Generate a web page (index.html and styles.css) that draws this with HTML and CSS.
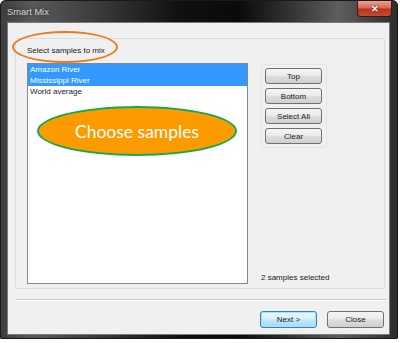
FILE: index.html
```html
<!DOCTYPE html>
<html lang="en">
<head>
    <meta charset="UTF-8">
    <meta name="viewport" content="width=device-width, initial-scale=1.0">
    <title>Smart Mix</title>
    <link rel="stylesheet" href="styles.css">
</head>
<body>
    <!-- Dialog window -->
    <div class="window">
        <div class="titlebar">
            <span class="title">Smart Mix</span>
            <button class="close-btn">&#x2715;</button>
        </div>

        <div class="client">
            <div class="group">
                <p class="label">Select samples to mix</p>
                <div class="group-body">
                    <ul class="listbox">
                        <li class="selected">Amazon River</li>
                        <li class="selected">Mississippi River</li>
                        <li>World average</li>
                    </ul>
                    <div class="side">
                        <div class="side-buttons">
                            <button class="btn">Top</button>
                            <button class="btn">Bottom</button>
                            <button class="btn">Select All</button>
                            <button class="btn">Clear</button>
                        </div>
                        <p class="status">2 samples selected</p>
                    </div>
                </div>
            </div>

            <div class="separator"></div>

            <div class="footer">
                <button class="btn btn-default">Next &gt;</button>
                <button class="btn">Close</button>
            </div>
        </div>
    </div>

    <!-- Callout annotations -->
    <div class="callout-ring"></div>
    <div class="callout-bubble">Choose samples</div>
</body>
</html>
```

FILE: styles.css
```css
body {
    margin: 0;
    width: 400px;
    height: 343px;
    background: #fff;
    font-family: "Liberation Sans", Arial, sans-serif;
    font-size: 8px;
    color: #1a1a1a;
    position: relative;
    overflow: hidden;
}

/* Window frame */
.window {
    width: 398px;
    height: 339px;
    box-sizing: border-box;
    padding: 0 8px 4px 7px;
    border-radius: 6px 6px 2px 2px;
    background: linear-gradient(90deg, #3c3c3c 0%, #5a5a5a 8%, #404040 22%, #101010 45%, #0a0a0a 60%, #3a3a3a 75%, #5e5e5e 85%, #2c2c2c 100%);
    box-shadow: inset 0 0 0 1px #1a1a1a;
}

.titlebar {
    height: 22px;
    display: flex;
    align-items: flex-start;
    justify-content: space-between;
}

.title {
    margin-top: 7px;
    font-size: 9.3px;
    color: #d4d4d4;
    text-shadow: 0 0 4px rgba(0, 0, 0, 0.6);
}

.close-btn {
    width: 35px;
    height: 16px;
    margin: 1px -2px 0 0;
    border: 1px solid #3a1a14;
    border-top: none;
    border-radius: 0 0 4px 4px;
    background: linear-gradient(#e6a492 0%, #d46a52 45%, #b8321c 55%, #c64a30 100%);
    color: #fff;
    font-size: 9px;
    font-weight: bold;
    line-height: 14px;
    padding: 0;
    text-shadow: 0 0 2px #5a1008;
}

/* Client area */
.client {
    height: 313px;
    background: #f0f0f0;
    border: 1px solid #7a7a7a;
    box-sizing: border-box;
    padding: 15px 4px 0 7px;
}

.group {
    height: 251px;
    box-sizing: border-box;
    border: 1px solid #dcdcdc;
    border-radius: 2px;
    padding: 0 0 0 11px;
}

.label {
    margin: 7px 0 0;
    height: 17px;
    line-height: 10px;
}

.group-body {
    display: flex;
    gap: 13px;
}

.listbox {
    list-style: none;
    margin: 0;
    padding: 0;
    width: 221px;
    height: 221px;
    box-sizing: border-box;
    background: #fff;
    border: 1px solid #828790;
}

.listbox li {
    height: 11px;
    line-height: 11px;
    padding-left: 2px;
}

.listbox li.selected {
    background: #3399ff;
    color: #fff;
}

.side {
    display: flex;
    flex-direction: column;
    justify-content: space-between;
    height: 221px;
    padding-top: 1px;
    box-sizing: border-box;
}

.side-buttons {
    width: 66px;
    height: 84px;
    box-sizing: border-box;
    border: 1px solid #e4e4e4;
    border-radius: 2px;
    padding: 3px;
    display: flex;
    flex-direction: column;
    gap: 4px;
}

.btn {
    width: 57px;
    height: 17px;
    padding: 0;
    border: 1px solid #707070;
    border-radius: 3px;
    background: linear-gradient(#f4f4f4 0%, #ebebeb 45%, #dddddd 55%, #cfcfcf 100%);
    font-family: "Liberation Sans", Arial, sans-serif;
    font-size: 8px;
    color: #1a1a1a;
}

.status {
    margin: 0 0 1px;
    line-height: 10px;
}

.separator {
    margin: 10px 0 0 1px;
    width: 370px;
    height: 1px;
    background: #c8c8c8;
    border-bottom: 1px solid #fff;
}

.footer {
    display: flex;
    justify-content: flex-end;
    gap: 10px;
    padding: 10px 1px 0 0;
}

.btn-default {
    border-color: #3c7fb1;
    background: linear-gradient(#eaf6fd 0%, #d9f0fc 45%, #bee6fd 55%, #a7d9f5 100%);
    box-shadow: inset 0 0 0 1px #9fe6f9;
}

/* Annotations drawn over the dialog */
.callout-ring {
    position: absolute;
    left: 12px;
    top: 31px;
    width: 102px;
    height: 28px;
    border: 2.5px solid #ec7a1c;
    border-radius: 50%;
}

.callout-bubble {
    position: absolute;
    left: 37px;
    top: 106px;
    width: 196px;
    height: 46px;
    border: 2.5px solid #16a84c;
    border-radius: 50%;
    background: #fb9b00;
    color: #fff;
    font-family: Lato, "Open Sans", sans-serif;
    font-size: 17.5px;
    display: flex;
    align-items: center;
    justify-content: center;
}
```
